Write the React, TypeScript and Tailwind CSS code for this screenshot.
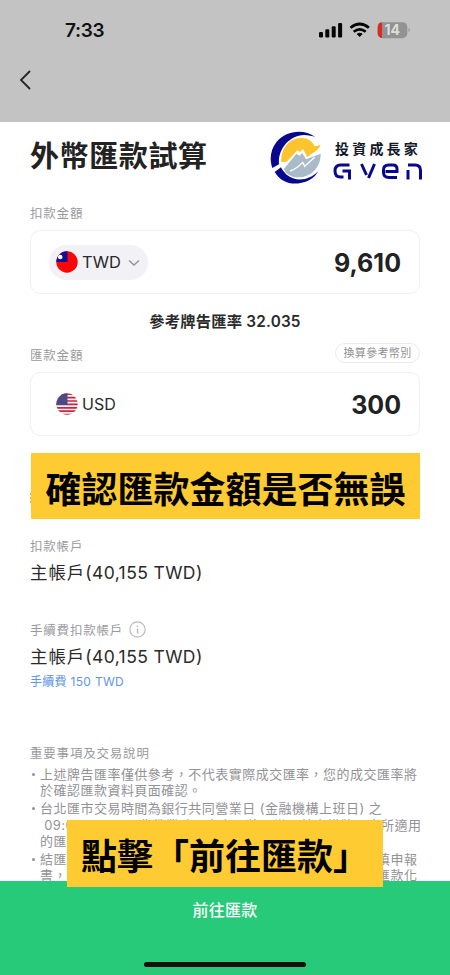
import React from "react";

const sans = "font-['Inter','Noto_Sans_CJK_TC',sans-serif]";

function StatusBar() {
  return (
    <div className="flex h-[60px] items-center justify-between pl-[65px] pr-[39px] pt-px">
      <span className="text-[19px] font-semibold leading-none tracking-[-0.3px] text-[#111]">7:33</span>
      <svg width="92" height="18" viewBox="0 0 92 18" className="shrink-0">
        <g fill="#050505">
          <rect x="0" y="10" width="4" height="5.5" rx="1.2" />
          <rect x="6.3" y="7.2" width="4" height="8.3" rx="1.2" />
          <rect x="12.7" y="4.2" width="4" height="11.3" rx="1.2" />
          <rect x="19.1" y="1" width="4" height="14.5" rx="1.2" />
          <path d="M38.2 12q2.5-1.6 5 0l-2.5 2.5z" strokeLinejoin="round" stroke="#050505" />
        </g>
        <g fill="none" stroke="#050505" strokeWidth="2.7">
          <path d="M31.5 5.8q9.2-7.6 18.4 0" />
          <path d="M34.7 9.8q6-4.8 12 0" />
        </g>
        <clipPath id="battery">
          <rect x="58.7" y="0.2" width="29.6" height="16" rx="4.8" />
        </clipPath>
        <g clipPath="url(#battery)">
          <rect x="58" y="0" width="31" height="17" fill="#929292" />
          <rect x="58" y="0" width="5" height="17" fill="#d82b28" />
        </g>
        <path d="M89.6 5.8q2.4 2.3 0 4.8z" fill="#8d8d8d" />
        <text x="73.2" y="13.2" textAnchor="middle" fontSize="14" fontWeight="700" fill="#dedede" fontFamily="Inter">14</text>
      </svg>
    </div>
  );
}

function Logo() {
  return (
    <div className="flex items-start">
      <svg width="54" height="55" viewBox="30 25 162 165" className="shrink-0">
        <path d="M166 46C132 20 78 26 50 60C31 84 28 112 37 139L57 128C53 84 86 42 132 40C146 40 157 43 166 46z" fill="#08088f" />
        <path d="M44 151C62 181 92 190 122 184C147 180 165 167 174 149C148 178 106 181 80 159C71 151 65 142 63 137z" fill="#08088f" />
        <path d="M64 121C62 82 86 50 122 49C143 48 157 58 164 74L182 70C176 84 164 91 150 99L142 107L129 81L121 91L112 86L100 99L80 120z" fill="#fec42d" />
        <path d="M72 141L109 96L119 102L127 94L138 113L182 96C183 136 153 168 113 167C97 167 84 160 76 151z" fill="#a9bac8" />
        <path d="M90 148C105 143 115 136 128 122L134 134L164 107" fill="none" stroke="#fff" strokeWidth="4" />
      </svg>
      <div className="flex flex-col pl-[11px] pt-[10px]">
        <span className="-mr-2 whitespace-nowrap text-[14px] font-bold leading-[18px] tracking-[3.2px] text-[#11182b]">投資成長家</span>
        <svg width="90" height="18" viewBox="0 0 90 18" className="-ml-0.5 mt-[5px]" fill="none" stroke="#08088f" strokeWidth="3">
          <path d="M16.5 2H7.5Q2 2 2 8Q2 14 7.5 14H10.5M9.5 8H16.5V16.5" />
          <path d="M28.5 1L33.5 12M35.5 15L41.5 1" />
          <path d="M52.5 8.5H64V6Q64 2 60 2H55.5Q50.5 2 50.5 7V9.5Q50.5 14.5 56 14.5H64" />
          <path d="M75 16.5V7M75 2H82Q87.5 2 87.5 7.5V16.5" />
        </svg>
      </div>
    </div>
  );
}

function TaiwanFlag() {
  return (
    <svg width="22" height="22" viewBox="0 0 22 22">
      <clipPath id="tw"><circle cx="11" cy="11" r="10.7" /></clipPath>
      <g clipPath="url(#tw)">
        <rect width="22" height="22" fill="#fb0505" />
        <rect width="11.5" height="11" fill="#10109a" />
        <circle cx="4.2" cy="6" r="2.3" fill="#fff" />
      </g>
    </svg>
  );
}

function UsFlag() {
  return (
    <svg width="22" height="22" viewBox="0 0 22 22">
      <clipPath id="us"><circle cx="11" cy="11" r="10.7" /></clipPath>
      <g clipPath="url(#us)">
        <rect width="22" height="22" fill="#f7f2f5" />
        <path d="M0 1.2H22M0 4.6H22M0 8H22M0 11.4H22M0 14.8H22M0 18.2H22M0 21.5H22" stroke="#c92742" strokeWidth="1.7" />
        <rect width="11.5" height="12" fill="#4c4a84" />
      </g>
    </svg>
  );
}

function Label({ children }: { children: React.ReactNode }) {
  return <div className="flex items-center text-[12.5px] leading-5 tracking-[0.8px] text-[#9a9a9e]">{children}</div>;
}

function Account() {
  return (
    <div className="whitespace-nowrap text-[17.5px] leading-7 tracking-[0.4px] text-[#2a2a2a]">
      <span className="tracking-[0.9px]">主帳戶</span>(40,155 TWD)
    </div>
  );
}

const notes = [
  ["上述牌告匯率僅供參考，不代表實際成交匯率，您的成交匯率將", "於確認匯款資料頁面確認。"],
  ["台北匯市交易時間為銀行共同營業日 (金融機構上班日) 之", " 09:00-15:30，非營業時間之交易將以當日首次掛牌匯率所適用", "的匯率為準。"],
  ["結匯金額達新臺幣五十萬元以上者，顧客應依相關規定詳填申報", "書，並檢附相關文件，未完成申報者本行將無法為您辦理匯款化"],
];

export default function App() {
  return (
    <div className={`relative flex h-[975px] w-[450px] flex-col overflow-hidden bg-white ${sans}`}>
      <header className="h-[122px] shrink-0 bg-[#c3c3c3]">
        <StatusBar />
        <svg width="14" height="20" viewBox="0 0 14 20" className="ml-[19px] mt-[10px]" fill="none" stroke="#252525" strokeWidth="1.8" strokeLinecap="round">
          <path d="M10.5 1.5L2 10l8.500 8.500" />
        </svg>
      </header>

      <main className="flex h-[759px] shrink-0 flex-col overflow-hidden px-[30px]">
        <div className="flex h-[82px] shrink-0 items-start justify-between">
          <h1 className="whitespace-nowrap pt-[14px] text-[29px] font-bold leading-[42px] tracking-[0.6px] text-[#222]">外幣匯款試算</h1>
          <div className="-mr-[3px] pt-[8px]"><Logo /></div>
        </div>
        <Label>扣款金額</Label>
        <div className="mt-[6px] flex h-16 shrink-0 items-center justify-between rounded-[10px] border-[1.5px] border-[#f0f0f1] pl-[18px] pr-[18px]">
          <div className="flex h-[35px] w-[99px] items-center rounded-full bg-[#f1f1f6] pl-[7px] text-[#2b2b2b]">
            <TaiwanFlag />
            <span className="ml-1 text-[16.5px] leading-5">TWD</span>
            <svg width="12" height="8" viewBox="0 0 12 8" className="ml-[7px] mt-0.5" fill="none" stroke="#929297" strokeWidth="1.4">
              <path d="M1 1.5L6 6l5-4.5" />
            </svg>
          </div>
          <span className="pt-[3px] text-[25px] font-bold text-[#222]">9,610</span>
        </div>
        <div className="mt-[16px] text-center text-[15.3px] font-semibold leading-6 tracking-[0.2px] text-[#2a2a2a]">參考牌告匯率 32.035</div>
        <div className="mt-[9px] flex h-5 items-center justify-between">
          <div className="pt-[5px]"><Label>匯款金額</Label></div>
          <span className="flex h-5 w-[85px] items-center justify-center rounded-full border border-[#eaeaea] text-[11px] tracking-[0.35px] text-[#8f8f94]">換算參考幣別</span>
        </div>
        <div className="mt-[9px] flex h-16 shrink-0 items-center justify-between rounded-[10px] border-[1.5px] border-[#f0f0f1] pl-[25px] pr-[18px]">
          <div className="flex items-center text-[#2b2b2b]">
            <UsFlag />
            <span className="ml-1 text-[16px] leading-5">USD</span>
          </div>
          <span className="pt-[3px] text-[25px] font-bold text-[#222]">300</span>
        </div>
        <div className="mt-[49px] h-6 text-[15px] font-bold leading-6 text-[#222]">結匯性質</div>
        <div className="mt-[28px]">
          <Label>扣款帳戶</Label>
          <div className="mt-[2px]"><Account /></div>
        </div>
        <div className="mt-[34px]">
          <Label>
            手續費扣款帳戶
            <svg width="17" height="17" viewBox="0 0 17 17" className="-mt-[3px] ml-1.5" fill="none" stroke="#bbb" strokeWidth="1.2">
              <circle cx="8.5" cy="8.5" r="7.7" />
              <path d="M8.5 7.5v5M8.5 4.5v1.5" strokeWidth="1.4" />
            </svg>
          </Label>
          <div className="mt-[2px]"><Account /></div>
          <div className="mt-px text-[12px] leading-5 tracking-[0.3px] text-[#6194e6]">手續費 150 TWD</div>
        </div>
        <div className="mt-[52px] shrink-0">
          <Label>重要事項及交易說明</Label>
          <ul className="mt-[2px] flex flex-col gap-[2px] text-[13px] leading-[16.2px] tracking-[0.48px] text-[#929296]">
            {notes.map((lines) => (
              <li key={lines[0]} className="flex">
                <span className="flex w-[10px] shrink-0 pl-[2px] pt-[7px]"><i className="size-[2.5px] rounded-full bg-[#929296]" /></span>
                <div>
                  {lines.map((line) => <div key={line} className="whitespace-pre">{line}</div>)}
                </div>
              </li>
            ))}
          </ul>
        </div>
      </main>

      <footer className="flex flex-1 flex-col items-center justify-between bg-[#27ca79] pb-2 pt-[17px]">
        <span className="text-[16px] font-medium leading-6 tracking-[0.3px] text-white">前往匯款</span>
        <div className="h-[5.5px] w-[162px] rounded-full bg-[#111]" />
      </footer>

      {/* Tutorial captions laid over the page */}
      <div className="absolute left-[31px] top-[453px] flex h-[66px] w-[389px] items-center justify-center whitespace-nowrap bg-[#ffcb32] pt-[7px] text-[36px] font-bold leading-none text-black">確認匯款金額是否無誤</div>
      <div className="absolute left-[67px] top-[820px] flex h-[67px] w-[316px] items-center justify-center whitespace-nowrap bg-[#ffcb32] pt-[6px] text-[36px] font-bold leading-none text-black">點擊「前往匯款」</div>
    </div>
  );
}
